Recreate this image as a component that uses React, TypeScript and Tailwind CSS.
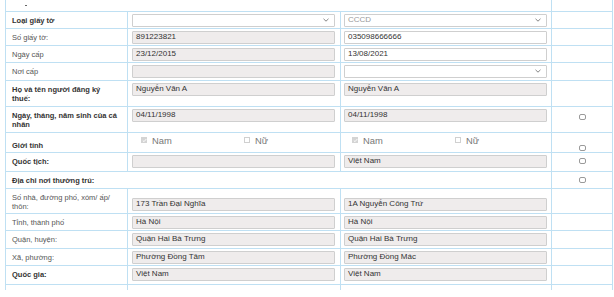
import React from "react";

const cell = "border border-[#bfe0f3] p-0 align-top";

function Chevron() {
  return (
    <svg width="6" height="4" viewBox="0 0 6 4" className="shrink-0">
      <path d="M0.5 0.8L3 3.2L5.5 0.8" fill="none" stroke="#777" strokeWidth="0.9" />
    </svg>
  );
}

function Field({
  value = "",
  gray = false,
  select = false,
  muted = false,
}: {
  value?: string;
  gray?: boolean;
  select?: boolean;
  muted?: boolean;
}) {
  return (
    <div
      className={`h-[13px] flex items-center justify-between border border-[#cfcfcf] rounded-[1px] pl-[3px] pr-[5px] text-[8px] leading-none ${
        gray ? "bg-[#efecec]" : "bg-white"
      } ${muted ? "text-[#999]" : "text-[#333]"}`}
    >
      <span className="whitespace-nowrap">{value}</span>
      {select && <Chevron />}
    </div>
  );
}

function Box() {
  return <div className="mx-auto w-[7px] h-[6px] rounded-[2px] border border-[#9a9a9a] bg-white" />;
}

function Gender() {
  return (
    <div className="flex pt-[3px] text-[9.4px] text-[#777] leading-none">
      <div className="w-[116px] pl-[13px] flex items-center gap-[5px]">
        <span className="w-[6px] h-[6px] bg-[#d4d4d4] flex items-center justify-center">
          <svg width="5" height="5" viewBox="0 0 5 5">
            <path d="M0.8 2.5L2 3.7L4.3 1" fill="none" stroke="#fff" strokeWidth="0.9" />
          </svg>
        </span>
        Nam
      </div>
      <div className="flex items-center gap-[5px]">
        <span className="w-[6px] h-[6px] border border-[#d0d0d0] bg-white" />
        Nữ
      </div>
    </div>
  );
}

function Label({ text, bold = false }: { text: string; bold?: boolean }) {
  return (
    <div
      className={`pl-[6px] pr-[9px] pt-[4px] text-[7.5px] leading-[9.5px] ${
        bold ? "font-bold text-[#333]" : "text-[#555]"
      }`}
    >
      {text}
    </div>
  );
}

type Row = {
  label: string;
  bold?: boolean;
  h: string;
  a?: React.ReactNode;
  b?: React.ReactNode;
  check?: boolean;
};

export default function App() {
  const rows: Row[] = [
    { label: "Loại giấy tờ", bold: true, h: "h-[17px]", a: <Field select />, b: <Field value="CCCD" select muted /> },
    { label: "Số giấy tờ:", h: "h-[17px]", a: <Field gray value="891223821" />, b: <Field value="035098666666" /> },
    { label: "Ngày cấp", h: "h-[17px]", a: <Field gray value="23/12/2015" />, b: <Field value="13/08/2021" /> },
    { label: "Nơi cấp", h: "h-[18px]", a: <Field gray />, b: <Field select /> },
    { label: "Họ và tên người đăng ký thuế:", bold: true, h: "h-[26px]", a: <Field gray value="Nguyễn Văn A" />, b: <Field gray value="Nguyễn Văn A" /> },
    { label: "Ngày, tháng, năm sinh của cá nhân", bold: true, h: "h-[26px]", a: <Field gray value="04/11/1998" />, b: <Field gray value="04/11/1998" />, check: true },
  ];
  const addr: Row[] = [
    { label: "Tỉnh, thành phố", h: "h-[17px]", a: <Field gray value="Hà Nội" />, b: <Field gray value="Hà Nội" /> },
    { label: "Quận, huyện:", h: "h-[18px]", a: <Field gray value="Quận Hai Bà Trưng" />, b: <Field gray value="Quận Hai Bà Trưng" /> },
    { label: "Xã, phường:", h: "h-[17px]", a: <Field gray value="Phường Đồng Tâm" />, b: <Field gray value="Phường Đồng Mác" /> },
    { label: "Quốc gia:", bold: true, h: "h-[19px]", a: <Field gray value="Việt Nam" />, b: <Field gray value="Việt Nam" /> },
  ];

  const renderRow = (r: Row) => (
    <tr key={r.label} className={r.h}>
      <td className={cell}>
        <Label text={r.label} bold={r.bold} />
      </td>
      <td className={cell}>
        <div className="pl-[4px] pr-[5px] pt-[2px]">{r.a}</div>
      </td>
      <td className={cell}>
        <div className="pl-[3px] pr-[4px] pt-[2px]">{r.b}</div>
      </td>
      <td className={cell}>{r.check && <div className="pt-[7px]"><Box /></div>}</td>
    </tr>
  );

  return (
    <div className="w-[614px] h-[297px] bg-white overflow-hidden font-['Liberation_Sans',Arial,sans-serif]">
      <table className="ml-[5px] border-collapse table-fixed w-[607px]">
        <colgroup>
          <col className="w-[122px]" />
          <col className="w-[213px]" />
          <col className="w-[211px]" />
          <col className="w-[61px]" />
        </colgroup>
        <tbody>
          <tr className="h-[11px]">
            <td colSpan={3} className="border-x border-[#bfe0f3] p-0 align-top">
              <div className="ml-[19px] mt-[5px] w-[2px] h-[1px] bg-[#666]" />
            </td>
            <td className="border-x border-[#bfe0f3] p-0" />
          </tr>
          {rows.map(renderRow)}
          <tr className="h-[20px]">
            <td className={`${cell} !align-bottom`}>
              <div className="pl-[6px] pb-[1px] text-[7.5px] leading-[9.5px] font-bold text-[#333]">Giới tính</div>
            </td>
            <td className={cell}>
              <Gender />
            </td>
            <td className={cell}>
              <div className="-ml-[2px]">
                <Gender />
              </div>
            </td>
            <td className={`${cell} !align-bottom`}>
              <div className="pb-[1px]">
                <Box />
              </div>
            </td>
          </tr>
          <tr className="h-[19px]">
            <td className={cell}>
              <Label text="Quốc tịch:" bold />
            </td>
            <td className={cell}>
              <div className="pl-[4px] pr-[5px] pt-[2px]">
                <Field gray />
              </div>
            </td>
            <td className={cell}>
              <div className="pl-[3px] pr-[4px] pt-[2px]">
                <Field gray value="Việt Nam" />
              </div>
            </td>
            <td className={cell}>
              <div className="pt-[5px]">
                <Box />
              </div>
            </td>
          </tr>
          <tr className="h-[17px]">
            <td colSpan={3} className={cell}>
              <Label text="Địa chỉ nơi thường trú:" bold />
            </td>
            <td className={cell}>
              <div className="pt-[5px]">
                <Box />
              </div>
            </td>
          </tr>
          <tr className="h-[25px]">
            <td className={cell}>
              <Label text="Số nhà, đường phố, xóm/ ấp/ thôn:" />
            </td>
            <td className={`${cell} !align-bottom`}>
              <div className="pl-[4px] pr-[5px] pb-[2px]">
                <Field gray value="173 Trần Đại Nghĩa" />
              </div>
            </td>
            <td className={`${cell} !align-bottom`}>
              <div className="pl-[3px] pr-[4px] pb-[2px]">
                <Field gray value="1A Nguyễn Công Trứ" />
              </div>
            </td>
            <td className={cell} />
          </tr>
          {addr.map(renderRow)}
          <tr className="h-[6px]">
            <td className="border-x border-[#bfe0f3] p-0" />
            <td className="border-x border-[#bfe0f3] p-0" />
            <td className="border-x border-[#bfe0f3] p-0" />
            <td className="border-x border-[#bfe0f3] p-0" />
          </tr>
        </tbody>
      </table>
    </div>
  );
}
